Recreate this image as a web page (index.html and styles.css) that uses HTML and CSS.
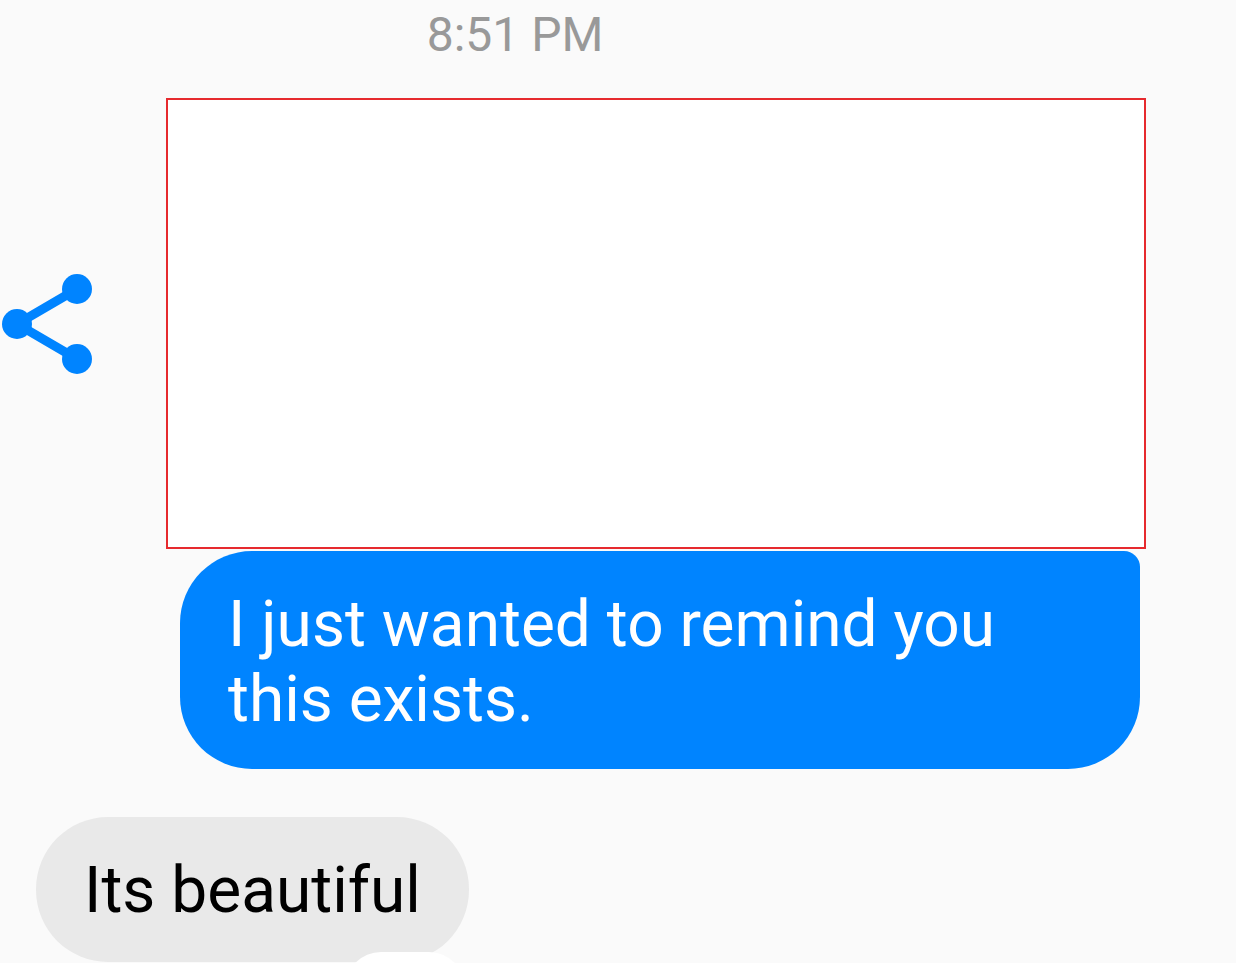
FILE: index.html
```html
<!DOCTYPE html>
<html lang="en">
<head>
    <meta charset="UTF-8">
    <meta name="viewport" content="width=device-width, initial-scale=1.0">
    <title>Chat</title>
    <link rel="stylesheet" href="styles.css">
</head>
<body>
    <main class="chat">
        <time class="timestamp" datetime="20:51">8:51 PM</time>

        <!-- shared attachment -->
        <div class="attachment-row">
            <button class="share" type="button" aria-label="Share">
                <svg width="94" height="104" viewBox="0 0 94 104">
                    <path d="M77 17L17 52L77 87" fill="none" stroke="#0084ff" stroke-width="9"/>
                    <circle cx="17" cy="52" r="15" fill="#0084ff"/>
                    <circle cx="77" cy="17" r="15" fill="#0084ff"/>
                    <circle cx="77" cy="87" r="15" fill="#0084ff"/>
                </svg>
            </button>
            <div class="attachment"></div>
        </div>

        <p class="bubble sent">I just wanted to remind you this exists.</p>

        <div class="bubble received">
            Its beautiful
            <span class="reaction"></span>
        </div>
    </main>
</body>
</html>
```
FILE: styles.css
```css
* {
    box-sizing: border-box;
}

body {
    margin: 0;
    background: #fafafa;
    font-family: Roboto, Arial, sans-serif;
}

.chat {
    display: flex;
    flex-direction: column;
    height: 100vh;
    padding-top: 7px;
    overflow: hidden;
}

.timestamp {
    flex-shrink: 0;
    padding-right: 206px;
    color: #999;
    font-size: 48px;
    line-height: 56px;
    text-align: center;
}

.attachment-row {
    display: flex;
    flex-shrink: 0;
    align-items: center;
    gap: 72px;
    margin-top: 35px;
    padding-right: 90px;
}

.share {
    padding: 0;
    border: none;
    background: none;
    cursor: pointer;
}

.share svg {
    display: block;
}

.attachment {
    flex: 1;
    height: 451px;
    background: white;
    border: 2px solid #e62a2e;
}

.bubble {
    flex-shrink: 0;
    margin: 0;
    padding: 36px 48px 34px;
    border-radius: 72px;
    font-size: 64px;
    line-height: 75px;
}

.sent {
    margin: 2px 96px 0 180px;
    padding-bottom: 32px;
    border-top-right-radius: 16px;
    background: #0084ff;
    color: white;
}

.received {
    position: relative;
    align-self: flex-start;
    margin: 48px 0 0 36px;
    background: #e9e9e9;
    color: black;
}

/* reaction pill over the bottom edge of the bubble */
.reaction {
    position: absolute;
    top: 135px;
    right: 4px;
    width: 120px;
    height: 72px;
    border-radius: 36px;
    background: white;
}
```
